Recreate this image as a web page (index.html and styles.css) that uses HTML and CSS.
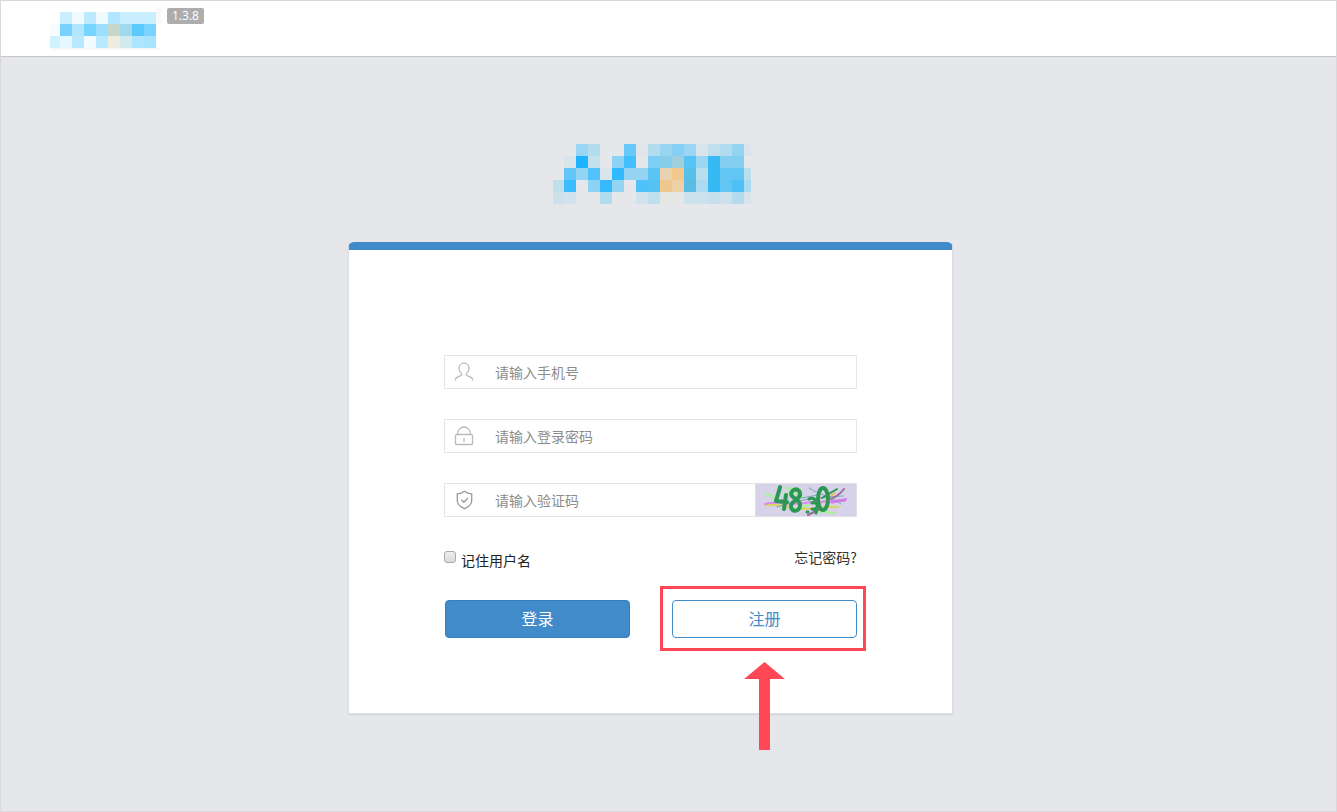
FILE: index.html
```
<!DOCTYPE html>
<html lang="zh-CN">
<head>
  <meta charset="UTF-8" />
  <meta name="viewport" content="width=device-width, initial-scale=1.0" />
  <title>登录</title>
  <link rel="stylesheet" href="styles.css">
</head>
<body>
  <header class="topbar">
    <svg class="topbar-logo" width="111" height="42" viewBox="0 0 111 42" shape-rendering="crispEdges" aria-hidden="true">
      <path fill="#f8f8f9" d="M106 0h5v16h-5zM0 40h111v2H0z"/>
      <path fill="#c9eeff" d="M10 4h12v12H10z"/><path fill="#f1fbff" d="M22 4h12v12H22z"/>
      <path fill="#bde9ff" d="M34 4h12v12H34z"/><path fill="#effaff" d="M46 4h12v12H46z"/>
      <path fill="#b0e6ff" d="M58 4h12v12H58z"/><path fill="#c9eeff" d="M70 4h36v12H70z"/>
      <path fill="#f7fdff" d="M0 16h10v12H0z"/><path fill="#77d2ff" d="M10 16h12v12H10z"/>
      <path fill="#b1e6ff" d="M22 16h12v12H22z"/><path fill="#77d3ff" d="M34 16h12v12H34z"/>
      <path fill="#9bdeff" d="M46 16h12v12H46z"/><path fill="#c6d7c9" d="M58 16h12v12H58z"/>
      <path fill="#a0d8ed" d="M70 16h12v12H70z"/><path fill="#5bcaff" d="M82 16h12v12H82z"/>
      <path fill="#7ad3ff" d="M94 16h12v12H94z"/>
      <path fill="#d2f1ff" d="M0 28h10v12H0z"/><path fill="#e5f7ff" d="M10 28h12v12H10z"/>
      <path fill="#b8e8ff" d="M22 28h12v12H22z"/><path fill="#f2fbff" d="M34 28h12v12H34z"/>
      <path fill="#b9e9ff" d="M46 28h12v12H46z"/><path fill="#eeede0" d="M58 28h12v12H58z"/>
      <path fill="#d2eaee" d="M70 28h12v12H70z"/><path fill="#ade4ff" d="M82 28h12v12H82z"/>
      <path fill="#a7e2ff" d="M94 28h12v12H94z"/>
    </svg>
    <span class="version">1.3.8</span>
  </header>

  <main class="content">
    <svg class="logo" width="198" height="60" viewBox="0 0 198 60" shape-rendering="crispEdges" aria-hidden="true">
      <path fill="#9ad6f3" d="M23 0h12v12H23z"/><path fill="#b3dcef" d="M35 0h12v12H35z"/>
      <path fill="#68c9f8" d="M71 0h12v12H71z"/><path fill="#e1e5e9" d="M83 0h12v12H83z"/>
      <path fill="#b3dcef" d="M95 0h12v12H95z"/><path fill="#98d5f1" d="M107 0h12v12h-12z"/>
      <path fill="#84cff3" d="M119 0h12v12h-12z"/><path fill="#9ad6f4" d="M131 0h12v12h-12z"/>
      <path fill="#d7e4eb" d="M143 0h12v12h-12z"/><path fill="#bfdfed" d="M155 0h12v12h-12z"/>
      <path fill="#b0dbf0" d="M167 0h12v12h-12z"/><path fill="#94d4f3" d="M179 0h12v12h-12z"/>
      <path fill="#dae4ea" d="M191 0h7v12h-7z"/>

      <path fill="#d7e5ea" d="M11 12h12v12H11z"/><path fill="#1db4ff" d="M23 12h12v12H23z"/>
      <path fill="#c5e0ed" d="M35 12h12v12H35z"/><path fill="#8bd2f4" d="M59 12h12v12H59z"/>
      <path fill="#43bffd" d="M71 12h12v12H71z"/><path fill="#7dcef4" d="M95 12h12v12H95z"/>
      <path fill="#85cdea" d="M107 12h12v12h-12z"/><path fill="#a0cfdb" d="M119 12h12v12h-12z"/>
      <path fill="#57c2f4" d="M131 12h12v12h-12z"/><path fill="#9ad5f1" d="M143 12h12v12h-12z"/>
      <path fill="#37baf3" d="M155 12h12v12h-12z"/><path fill="#83cff2" d="M167 12h24v12h-24z"/>

      <path fill="#62c7f8" d="M11 24h12v12H11z"/><path fill="#92d4f3" d="M23 24h12v12H23z"/>
      <path fill="#51c2fb" d="M35 24h12v12H35z"/><path fill="#d8e5eb" d="M47 24h12v12H47z"/>
      <path fill="#2fb9ff" d="M59 24h12v12H59z"/><path fill="#94d4f2" d="M71 24h24v12H71z"/>
      <path fill="#5ac4f4" d="M95 24h12v12H95z"/><path fill="#e9d1ad" d="M107 24h12v12h-12z"/>
      <path fill="#f2c88e" d="M119 24h12v12h-12z"/><path fill="#58c1ea" d="M131 24h12v12h-12z"/>
      <path fill="#b8dded" d="M143 24h12v12h-12z"/><path fill="#37baf3" d="M155 24h12v12h-12z"/>
      <path fill="#62c6f4" d="M167 24h24v12h-24z"/><path fill="#bbdeee" d="M191 24h7v12h-7z"/>

      <path fill="#c0dfed" d="M0 36h11v12H0z"/><path fill="#3dbdfe" d="M11 36h12v12H11z"/>
      <path fill="#8cd2f4" d="M35 36h12v12H35z"/><path fill="#36bafc" d="M47 36h12v12H47z"/>
      <path fill="#94d5f4" d="M59 36h12v12H59z"/><path fill="#4fc1fb" d="M83 36h12v12H83z"/>
      <path fill="#55c2f4" d="M95 36h12v12H95z"/><path fill="#efc88e" d="M107 36h12v12h-12z"/>
      <path fill="#eed0a5" d="M119 36h12v12h-12z"/><path fill="#59bce2" d="M131 36h12v12h-12z"/>
      <path fill="#acdaf0" d="M143 36h12v12h-12z"/><path fill="#37baf3" d="M155 36h12v12h-12z"/>
      <path fill="#62c6f4" d="M167 36h12v12h-12z"/><path fill="#4dc0f8" d="M179 36h12v12h-12z"/>
      <path fill="#aad9f2" d="M191 36h7v12h-7z"/>

      <path fill="#cde1eb" d="M0 48h11v12H0z"/><path fill="#d1e3ed" d="M11 48h12v12H11z"/>
      <path fill="#b1dbef" d="M47 48h12v12H47z"/><path fill="#cfe2ed" d="M83 48h12v12H83z"/>
      <path fill="#bedfee" d="M95 48h12v12H95z"/><path fill="#e6e6e5" d="M107 48h24v12h-24z"/>
      <path fill="#cbe1ec" d="M131 48h24v12h-24z"/><path fill="#c4e0ed" d="M155 48h12v12h-12z"/>
      <path fill="#cde1ec" d="M167 48h12v12h-12z"/><path fill="#b5dcee" d="M179 48h12v12h-12z"/>
      <path fill="#d9e4ea" d="M191 48h7v12h-7z"/>
    </svg>

    <form class="card">
      <div class="field">
        <label for="phone" aria-label="手机号">
          <svg width="20" height="20" viewBox="0 0 20 20">
            <path d="M10 1.200c-3 0-5 2.200-5 5.100 0 2 .8 3.900 2.500 5.400.6.8.4 1.600-.7 2C3.500 14.800 1.300 15.400 1.300 18.500M10 1.200c3 0 5 2.200 5 5.100 0 2-.8 3.900-2.500 5.400-.6.8-.4 1.600.7 2 3.300 1.100 5.500 1.700 5.500 4.800"/>
          </svg>
        </label>
        <input type="text" id="phone" placeholder="请输入手机号" />
      </div>

      <div class="field">
        <label for="password" aria-label="登录密码">
          <svg width="20" height="20" viewBox="0 0 20 20">
            <rect x="1.500" y="8.500" width="17" height="10" rx="1"/>
            <path d="M3.700 8.500V7.300a6.300 6.300 0 0 1 12.600 0v1.200M10 12v4"/>
          </svg>
        </label>
        <input type="password" id="password" placeholder="请输入登录密码" />
      </div>

      <div class="field">
        <label for="captcha" class="shield" aria-label="验证码">
          <svg width="20" height="20" viewBox="0 0 20 20">
            <path d="M10.500 1.300C8.400 3 6 3.700 3.300 3.800v7c0 3.500 3.200 6.100 7.200 7.800 4-1.700 7.200-4.300 7.200-7.800v-7C15 3.700 12.600 3 10.500 1.300zM7.300 9.800l2.500 2.500 4.200-4.300"/>
          </svg>
        </label>
        <input type="text" id="captcha" placeholder="请输入验证码" />
        <svg class="captcha" width="102" height="34" viewBox="0 0 102 34" role="img" aria-label="验证码图片">
          <path class="frame" d="M.5.5h101v33H.5z"/>
          <g fill="none" stroke-linecap="round" stroke-linejoin="round">
            <path stroke="#a2f58e" stroke-width="2" d="M11 11c5 0 8 4 12 8M28 13c6-5 12-4 20 1M31 5l15 2M53 22c-8 3-12 5-20 3M64 29c6-2 10 1 15 1"/>
            <path stroke="#d6d65b" stroke-width="2" d="M11 22c8 0 14-1 22 2M45 26c12 1 22-3 38-2"/>
            <path stroke="#e8be65" stroke-width="2" d="M62 27c2-8 10-10 18-17"/>
            <path stroke="#d98bee" stroke-width="2" d="M10 21c14-4 25 2 40-1s25 1 41-4"/>
            <path stroke="#d777ef" stroke-width="3" d="M77 19l13-2"/>
            <path stroke="#79aab0" d="M22 24c18-6 38-10 66-11M54 5c10 7 22 8 32 16M47 15l16-3"/>
            <path stroke="#9b6a9c" stroke-width="2" d="M53 32l12-6M76 16c5-2 9-5 13-10"/>
            <g stroke="#2c9655">
              <path stroke-width="4" d="M25 4c-1 5-3 10-4 14 4 0 7 1 11 1M31 12l-2 14"/>
              <path stroke-width="4" d="M44 8c-4-4-10 1-7 5 2 3 8 4 8 9 0 7-9 8-9 1 0-5 8-6 9-11 0-2 0-3-1-4z"/>
              <path stroke-width="3" d="M54 16c6-2 8 2 3 4 6-1 7 4 3 6M57 26c4 0 5 2 4 4M52 29h1"/>
              <ellipse stroke-width="4" cx="68" cy="16" rx="5" ry="11"/>
              <path stroke-width="2" d="M67 15l15-9"/>
            </g>
          </g>
        </svg>
      </div>

      <div class="options">
        <div class="remember">
          <input type="checkbox" id="remember" />
          <label for="remember">记住用户名</label>
        </div>
        <a href="#">忘记密码?</a>
      </div>

      <div class="actions">
        <button type="submit" class="btn btn-primary">登录</button>
        <div class="register">
          <button type="button" class="btn btn-outline">注册</button>
          <span class="highlight"></span>
          <svg class="arrow" width="42" height="88" viewBox="0 0 42 88" aria-hidden="true">
            <path fill="#ff4755" d="M20.500 0L41 17H26v71H15V17H0z"/>
          </svg>
        </div>
      </div>
    </form>
  </main>
</body>
</html>
```

FILE: styles.css
```
* {
  box-sizing: border-box;
}
body {
  margin: 0;
  min-height: 100vh;
  background: #e6e7eb;
  border: 1px solid #d9d9db;
  color: #222;
  font-family: "Noto Sans CJK SC", sans-serif;
  font-size: 14px;
}
.topbar {
  display: flex;
  align-items: flex-start;
  gap: 6px;
  height: 56px;
  padding: 7px 49px;
  background: #fff;
  border-bottom: 1px solid #c6c6c8;
}
.version {
  padding: 0 5px;
  border-radius: 2px;
  background: #adadad;
  color: #fff;
  font-family: "Open Sans", sans-serif;
  font-size: 12px;
  line-height: 16px;
}
.topbar-logo,
.logo {
  display: block;
}
.content {
  display: flex;
  flex-direction: column;
  align-items: center;
  padding: 87px 36px 60px 0;
}
.logo {
  margin-left: 3px;
}
.card {
  width: 100%;
  max-width: 605px;
  margin-top: 38px;
  padding: 105px 95px 75px;
  background: #fff;
  border: 1px solid #dcdde0;
  border-top: 8px solid #428bca;
  border-radius: 6px 6px 0 0;
  box-shadow: 0 1px 2px rgba(0, 0, 0, 0.08);
}
.field {
  display: flex;
  height: 34px;
  margin-bottom: 30px;
  border: 1px solid #e5e6e7;
}
.field label {
  display: flex;
  align-items: center;
  width: 50px;
  padding-left: 9px;
}
.field label svg {
  fill: none;
  stroke: #bbb;
  stroke-width: 1.3;
}
.field .shield svg {
  stroke: #999;
}
.field input {
  flex: 1;
  min-width: 0;
  padding: 0;
  border: 0;
  outline: 0;
  background: none;
  font-family: inherit;
  font-size: 14px;
}
.field input::placeholder {
  color: #8c8c8c;
}
.captcha {
  margin: -1px;
}
.captcha .frame {
  fill: #d6d2e7;
  stroke: #e0dfe8;
}
.options {
  display: flex;
  justify-content: space-between;
  align-items: flex-start;
  height: 40px;
  line-height: 20px;
}
.options a {
  color: #333;
  text-decoration: none;
}
.remember {
  display: flex;
  gap: 5px;
}
.remember label {
  padding-top: 3px;
}
.remember input {
  appearance: none;
  width: 12px;
  height: 12px;
  margin: 4px 0 0;
  border: 1px solid #aaa;
  border-radius: 3px;
  background: linear-gradient(#eee, #dadada);
}
.remember input:checked {
  background: #428bca;
}
.actions {
  display: flex;
  justify-content: space-between;
  margin-top: 13px;
  padding-left: 1px;
}
.btn {
  width: 185px;
  height: 38px;
  padding: 0 0 2px;
  border: 1px solid #428bca;
  border-radius: 4px;
  font-family: inherit;
  font-size: 16px;
  cursor: pointer;
}
.btn-primary {
  background: #428bca;
  border-color: #357ebd;
  color: #fff;
}
.btn-outline {
  background: #fff;
  color: #428bca;
}
.register {
  position: relative;
}
.highlight {
  position: absolute;
  top: -14px;
  left: -12px;
  width: 206px;
  height: 65px;
  border: 3px solid #ff4755;
  pointer-events: none;
}
.arrow {
  position: absolute;
  top: 62px;
  left: 72px;
  pointer-events: none;
}
```
